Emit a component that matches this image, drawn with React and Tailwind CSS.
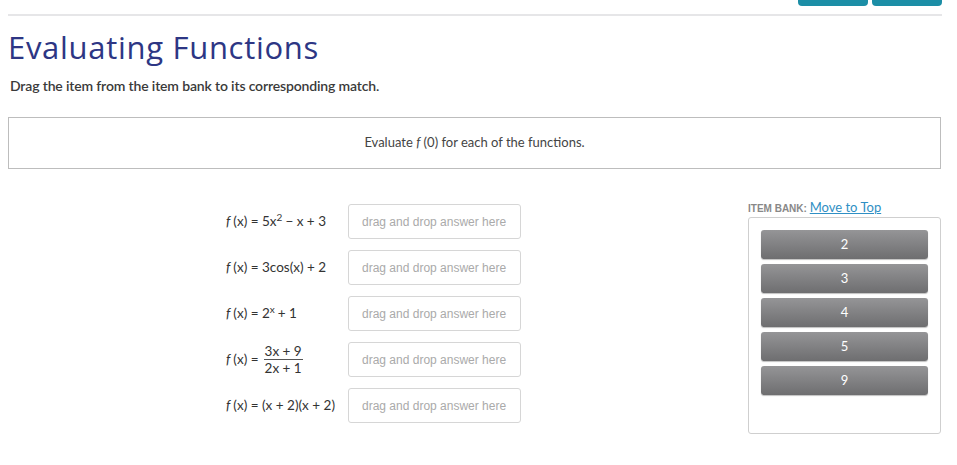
import React from 'react';

const rows = [
  { id: 'a', expr: <>= 5x<sup className="text-[10px] mr-[3px]">2</sup> − x + 3</> },
  { id: 'b', expr: <>= 3cos(x) + 2</> },
  { id: 'c', expr: <>= 2<sup className="text-[10px] mr-[3px]">x</sup> + 1</> },
  {
    id: 'd',
    expr: (
      <span className="inline-flex items-center gap-[5px]">
        =
        <span className="inline-flex flex-col items-center leading-[16px]">
          <span className="border-b border-[#555] px-[1px]">3x + 9</span>
          <span>2x + 1</span>
        </span>
      </span>
    ),
  },
  { id: 'e', expr: <>= (x + 2)(x + 2)</> },
];

const bank = ['2', '3', '4', '5', '9'];

export default function App() {
  return (
    <div className="relative w-[957px] h-[465px] bg-white overflow-hidden font-['Lato',sans-serif] text-[#333]">
      {/* top action buttons, cut off by the viewport */}
      <div className="absolute top-[-20px] left-[798px] flex gap-1">
        <div className="w-[70px] h-[26px] rounded-[4px] bg-[#1c8ea6]" />
        <div className="w-[70px] h-[26px] rounded-[4px] bg-[#1c8ea6]" />
      </div>

      <div className="px-2 pt-[14px]">
        <div className="h-[2px] bg-[#e6e6e8] mr-[7px]" />

        <h1 className="mt-[12px] font-['Open_Sans',sans-serif] text-[31px] leading-[38px] text-[#2d3684] tracking-[0.7px]">Evaluating Functions</h1>
        <p className="mt-[9px] ml-[2px] text-[14px] font-semibold text-[#3a3a3a] tracking-[-0.15px]">
          Drag the item from the item bank to its corresponding match.
        </p>

        <div className="mt-[21px] mr-[8px] h-[52px] border border-[#bdbdbd] flex items-center justify-center text-[13px] text-[#444]">
          Evaluate&nbsp;<i>f</i>&nbsp;(0) for each of the functions.
        </div>

        <div className="flex mt-[35px]">
          <div className="ml-[218px] flex flex-col gap-[11px]">
            {rows.map((r) => (
              <div key={r.id} className="flex items-center h-[35px]">
                <div className="w-[122px] text-[13.5px] text-[#333] whitespace-nowrap flex items-center">
                  <i className="mr-[3px]">f</i>(x)&nbsp;{r.expr}
                </div>
                <div className="w-[173px] h-[35px] border border-[#d6d6d6] rounded-[3px] flex items-center pl-[13px] font-['Liberation_Sans',Arial,sans-serif] text-[12px] text-[#aaaaaa]">
                  drag and drop answer here
                </div>
              </div>
            ))}
          </div>

          <div className="ml-auto mr-[8px] -mt-[5px] w-[193px]">
            <div className="text-[11px] leading-[16px]">
              <span className="font-bold uppercase text-[#888] font-['Liberation_Sans',Arial,sans-serif] text-[10px]">Item Bank:</span>{' '}
              <span className="text-[13px] text-[#2f8fc4] underline">Move to Top</span>
            </div>
            <div className="h-[217px] border border-[#cfcfcf] rounded-[3px] px-[12px] pt-[12px] flex flex-col gap-[5px]">
              {bank.map((n) => (
                <div
                  key={n}
                  className="h-[29px] rounded-[3px] bg-gradient-to-b from-[#959597] to-[#6e6e70] shadow-[0_1px_1px_rgba(0,0,0,0.25)] flex items-center justify-center text-white text-[13px]"
                >
                  {n}
                </div>
              ))}
            </div>
          </div>
        </div>
      </div>
    </div>
  );
}
